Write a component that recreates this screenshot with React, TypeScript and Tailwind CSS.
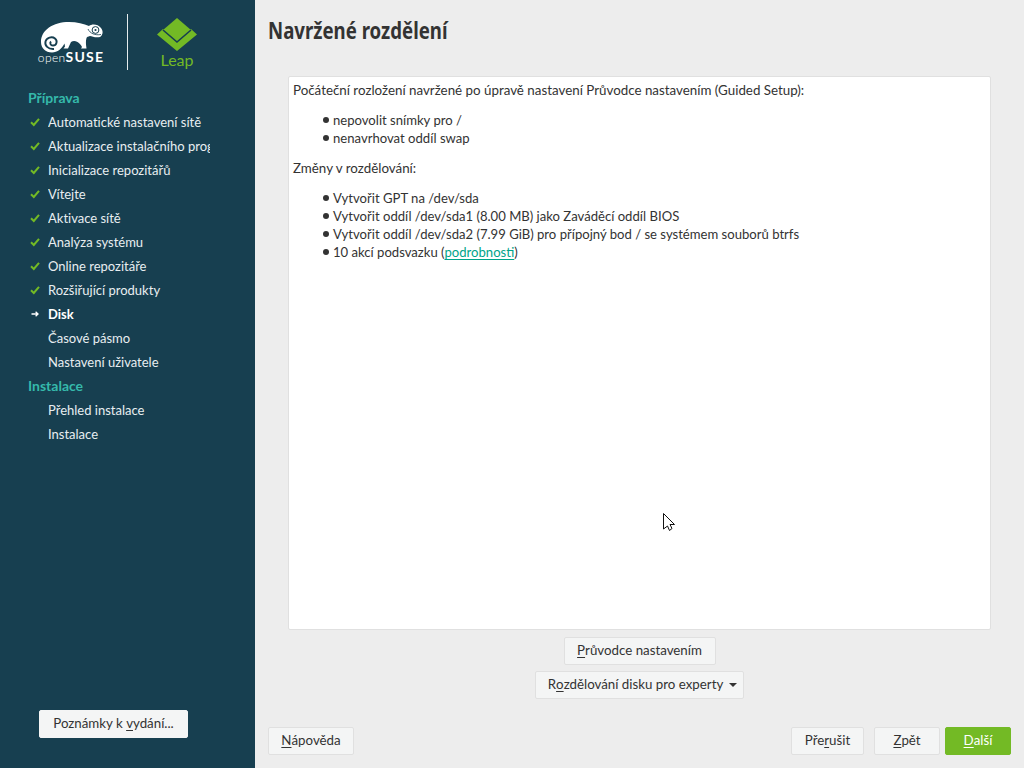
import React from "react";

function Check() {
  return (
    <svg width="10" height="10" viewBox="0 0 10 10" className="shrink-0">
      <path d="M1 5.2 L3.8 8 L9 1.8" fill="none" stroke="#73ba25" strokeWidth="2" />
    </svg>
  );
}

function Arrow() {
  return (
    <svg width="10" height="10" viewBox="0 0 10 10" className="shrink-0">
      <path d="M1.5 5 H8 M5.6 2.8 L8 5 L5.6 7.2" fill="none" stroke="#ffffff" strokeWidth="1.3" />
    </svg>
  );
}

function Step({ label, state }: { label: string; state?: "done" | "current" }) {
  return (
    <div className="flex h-6 items-center">
      <div className="flex w-[48px] shrink-0 justify-end pr-[8px]">
        <span className="flex w-[11px] justify-center">
          {state === "done" && <Check />}
          {state === "current" && <Arrow />}
        </span>
      </div>
      <span className={`w-[162px] overflow-hidden whitespace-nowrap pt-[2px] text-[13px] ${state === "current" ? "font-bold text-white" : "text-[#e8eef0]"}`} style={{ fontVariantLigatures: "none" }}>
        {label}
      </span>
    </div>
  );
}

function Head({ label }: { label: string }) {
  return (
    <div className="flex h-6 items-center pb-[2px] pl-[28px] text-[14px] font-bold text-[#35b9ab]">{label}</div>
  );
}

function Btn({ children, className = "" }: { children: React.ReactNode; className?: string }) {
  return (
    <button className={`flex h-[28px] items-center justify-center rounded-[2px] border pb-[1px] text-[13.3px] ${className}`}>
      {children}
    </button>
  );
}

const plain = "border-[#e0e0e0] bg-[#f4f5f5] text-[#333333]";

function M({ children }: { children: React.ReactNode }) {
  return <span className="underline underline-offset-2">{children}</span>;
}

function Logo() {
  return (
    <div className="flex h-[86px] items-start">
      <div className="relative ml-[37px] mt-[21px] flex h-[44px] w-[68px] flex-col items-center">
        <svg width="66" height="32" viewBox="0 0 66 32" className="shrink-0">
          <path
            fill="#ffffff"
            d="M3 21 C3 9 15 1 31 1 C39 1 46 3 51 5 C54 2.5 60 3 63 7 C65.5 10 65 14 62 16 C58 17 54 15.5 52 15 C50 15.5 49 16 48.5 17 C47.5 20 48 24 48.5 27.5 L43 27.5 L44 26 C43 24 41.5 22 39.5 21 C37 19.5 35 19.5 33 21 L30 27.5 L25.5 27.5 L27 25.5 L26.5 22.5 C24 27.5 19.5 31.5 14 31.5 C7.5 31.5 3 27 3 21 Z"
          />
          <circle cx="57.5" cy="9" r="3.4" fill="none" stroke="#173f50" strokeWidth="1" />
          <circle cx="57.5" cy="9" r="1.1" fill="#173f50" />
          <path d="M50 8 C52 12.5 57 14.5 63 13.5" fill="none" stroke="#173f50" strokeWidth="0.8" />
          <path
            d="M16 28 C10 28.5 6.5 24.5 7.5 20.5 C8.5 16.5 14 15 17 17.5 C20 20 18.5 24.5 15 24.5 C12.5 24.5 11.5 22 13 20.5"
            fill="none"
            stroke="#173f50"
            strokeWidth="1.9"
          />
        </svg>
        <div className="-mt-[2px] flex items-baseline whitespace-nowrap leading-[11px] text-white">
          <span className="text-[12px] font-light tracking-[0.4px]">open</span>
          <span className="text-[14px] font-bold tracking-[1.2px]">SUSE</span>
        </div>
      </div>
      <div className="ml-[22px] mt-[14px] h-[56px] w-px bg-[#e5ecee]" />
      <div className="ml-[29px] mt-[18px] flex w-[40px] flex-col items-center">
        <svg width="40" height="33" viewBox="0 0 40 33" className="shrink-0">
          <path d="M20 0 L34 12 L20 24 L6 12 Z" fill="#73ba25" />
          <path d="M6 11 L20 23 L34 11 L40 16.5 L20 33 L0 16.5 Z" fill="#73ba25" />
          <path d="M6 12 L20 24 L34 12" fill="none" stroke="#173f50" strokeWidth="1.6" />
        </svg>
        <div className="text-[16px] leading-[17px] text-[#73ba25]">Leap</div>
      </div>
    </div>
  );
}

function Li({ children }: { children: React.ReactNode }) {
  return (
    <li className="flex items-center pl-[30px] text-[13.1px]">
      <span className="mr-[4px] h-[6px] w-[6px] rounded-full bg-[#333333]" />
      <span>{children}</span>
    </li>
  );
}

export default function App() {
  return (
    <div
      className="relative flex h-[768px] w-[1024px] overflow-hidden bg-[#ededed] text-[#333333]"
      style={{ fontFamily: "Lato, sans-serif" }}
    >
      <aside className="flex w-[255px] shrink-0 flex-col bg-[#173f50]">
        <Logo />
        <Head label="Příprava" />
        <Step state="done" label="Automatické nastavení sítě" />
        <Step state="done" label="Aktualizace instalačního programu" />
        <Step state="done" label="Inicializace repozitářů" />
        <Step state="done" label="Vítejte" />
        <Step state="done" label="Aktivace sítě" />
        <Step state="done" label="Analýza systému" />
        <Step state="done" label="Online repozitáře" />
        <Step state="done" label="Rozšiřující produkty" />
        <Step state="current" label="Disk" />
        <Step label="Časové pásmo" />
        <Step label="Nastavení uživatele" />
        <Head label="Instalace" />
        <Step label="Přehled instalace" />
        <Step label="Instalace" />
        <div className="mt-auto mb-[30px] ml-[39px]">
          <Btn className="w-[149px] border-[#f4f5f5] bg-[#f4f5f5] text-[#333333]">Poznámky k&nbsp;<M>v</M>ydání...</Btn>
        </div>
      </aside>
      <main className="flex min-w-0 flex-1 flex-col">
        <h1 className="ml-[13px] mt-[14px] h-[32px] origin-left scale-x-[0.81] whitespace-nowrap text-[23px] font-bold leading-[32px] text-[#333333]" style={{ fontFamily: "'Noto Sans', sans-serif" }}>
          Navržené rozdělení
        </h1>
        <section className="ml-[33px] mr-[33px] mt-[30px] h-[554px] rounded-[2px] border border-[#e0e0e0] bg-white pl-[4px] pt-[4px] text-[13.35px] leading-[18px]">
          <p>Počáteční rozložení navržené po úpravě nastavení Průvodce nastavením (Guided Setup):</p>
          <ul className="mb-[12px] mt-[12px]">
            <Li>nepovolit snímky pro /</Li>
            <Li>nenavrhovat oddíl swap</Li>
          </ul>
          <p>Změny v rozdělování:</p>
          <ul className="mt-[12px]">
            <Li>Vytvořit GPT na /dev/sda</Li>
            <Li>Vytvořit oddíl /dev/sda1 (8.00 MB) jako Zaváděcí oddíl BIOS</Li>
            <Li>Vytvořit oddíl /dev/sda2 (7.99 GiB) pro přípojný bod / se systémem souborů btrfs</Li>
            <Li>
              10 akcí podsvazku (<span className="text-[#00a489] underline underline-offset-2">podrobnosti</span>)
            </Li>
          </ul>
        </section>
        <div className="mt-[7px] flex flex-col items-center gap-[6px]">
          <Btn className={`w-[152px] ${plain}`}><M>P</M>růvodce nastavením</Btn>
          <Btn className={`w-[209px] pl-[6px] ${plain}`}>
            R<M>o</M>zdělování disku pro experty
            <span className="ml-[6px] h-0 w-0 border-x-[4px] border-t-[4px] border-x-transparent border-t-[#333333]" />
          </Btn>
        </div>
        <div className="mt-auto mb-[13px] ml-[13px] mr-[13px] flex items-center">
          <Btn className={`w-[86px] ${plain}`}><M>N</M>ápověda</Btn>
          <Btn className={`ml-auto w-[73px] ${plain}`}>Pře<M>r</M>ušit</Btn>
          <Btn className={`ml-[10px] w-[66px] ${plain}`}><M>Z</M>pět</Btn>
          <Btn className="ml-[5px] w-[66px] border-[#73ba25] bg-[#73ba25] text-white"><M>D</M>alší</Btn>
        </div>
      </main>
      <svg width="14" height="20" viewBox="0 0 14 20" className="absolute left-[662px] top-[512px]">
        <path d="M1.5 1.5 L12.5 12.5 L8 12.5 L10 16.5 L7.5 18.5 L5.5 14 L1.5 17 Z" fill="#ffffff" stroke="#111111" strokeWidth="1" />
      </svg>
    </div>
  );
}
